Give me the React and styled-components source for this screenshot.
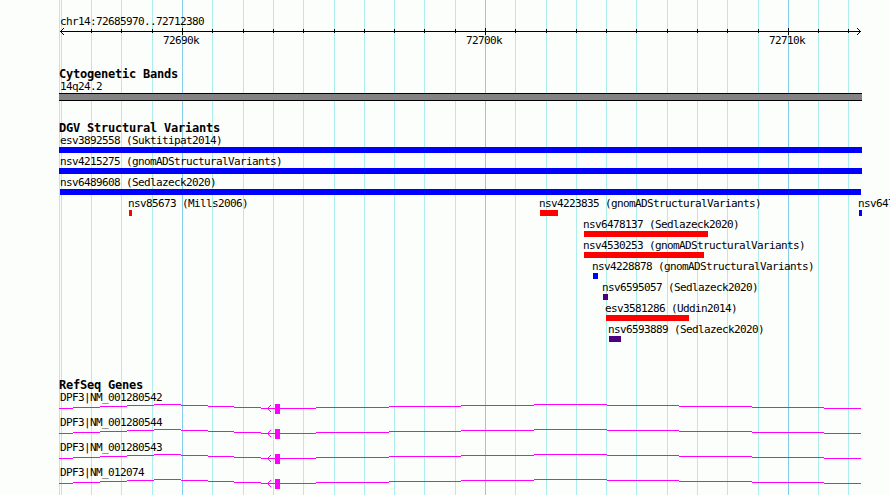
import * as React from 'react'
import styled, { createGlobalStyle } from 'styled-components'

const GlobalStyle = createGlobalStyle`
    body {
        margin: 0;
        background: #fcfefc;
        overflow: hidden;
    }
`

const COLORS = {
    gain: '#0000ff',
    loss: '#ff0000',
    complex: '#4b0082',
    gene: '#ff00ff',
}

const MINOR = [
    91, 121, 152, 212, 243, 273, 303, 334, 364, 394, 424, 455, 515, 546, 576,
    606, 636, 667, 697, 727, 758, 818, 848,
]
const MAJOR = [182, 485, 788]

const VARIANTS = [
    { name: 'esv3892558 (Suktitipat2014)', start: 59, width: 803, type: 'gain' },
    {
        name: 'nsv4215275 (gnomADStructuralVariants)',
        start: 59,
        width: 803,
        type: 'gain',
    },
    { name: 'nsv6489608 (Sedlazeck2020)', start: 60, width: 801, type: 'gain' },
]

const PACKED = [
    { name: 'nsv85673 (Mills2006)', start: 129, width: 3, type: 'loss' },
    {
        name: 'nsv4223835 (gnomADStructuralVariants)',
        start: 540,
        width: 18,
        type: 'loss',
    },
    { name: 'nsv647', start: 859, width: 3, type: 'gain' },
]

const NESTED = [
    { name: 'nsv6478137 (Sedlazeck2020)', start: 584, width: 124, type: 'loss' },
    {
        name: 'nsv4530253 (gnomADStructuralVariants)',
        start: 584,
        width: 120,
        type: 'loss',
    },
    {
        name: 'nsv4228878 (gnomADStructuralVariants)',
        start: 593,
        width: 5,
        type: 'gain',
    },
    { name: 'nsv6595057 (Sedlazeck2020)', start: 603, width: 5, type: 'complex' },
    { name: 'esv3581286 (Uddin2014)', start: 606, width: 83, type: 'loss' },
    { name: 'nsv6593889 (Sedlazeck2020)', start: 609, width: 12, type: 'complex' },
]

// every row holds the features that fit side by side
const ROWS = [...VARIANTS.map(v => [v]), PACKED, ...NESTED.map(v => [v])]

const GENES = [
    'DPF3|NM_001280542',
    'DPF3|NM_001280544',
    'DPF3|NM_001280543',
    'DPF3|NM_012074',
]

// [from, to, y] pieces of the intron line
const INTRON = [
    [59, 73, 4],
    [73, 100, 3],
    [100, 127, 2],
    [127, 154, 1],
    [154, 181, 0],
    [181, 208, 1],
    [208, 234, 2],
    [234, 261, 3],
    [261, 316, 4],
    [316, 389, 3],
    [389, 461, 2],
    [461, 534, 1],
    [534, 607, 0],
    [607, 679, 1],
    [679, 752, 2],
    [752, 824, 3],
    [824, 861, 4],
]

const Page = styled.div`
    position: relative;
    width: 890px;
    height: 495px;
    overflow: hidden;
    background: #fcfefc;
    color: #000;
    font-family: 'DejaVu Sans Mono', 'Liberation Mono', monospace;
`

const GridLines = styled.svg`
    position: absolute;
    inset: 0;
    shape-rendering: crispEdges;
`

const Tracks = styled.main`
    position: relative;
    display: flex;
    flex-direction: column;
`

const Label = styled.div`
    height: 12px;
    line-height: 12px;
    font-size: 11px;
    letter-spacing: -0.622px;
    white-space: pre;
`

const Title = styled.h2`
    margin: 0 0 1px 59px;
    height: 12px;
    line-height: 12px;
    font-size: 12px;
    font-weight: 700;
    letter-spacing: -0.224px;
    white-space: pre;
`

const Ruler = styled.header`
    display: flex;
    flex-direction: column;
    padding-top: 16px;
    height: 53px;
    box-sizing: border-box;
`

const Region = styled(Label)`
    margin-left: 60px;
`

const Axis = styled.svg`
    display: block;
    flex: none;
    shape-rendering: crispEdges;
`

const Scale = styled.div`
    display: grid;
    grid-template-columns: 303px 303px 1fr;
    margin-left: 163px;
`

const Track = styled.section`
    display: flex;
    flex-direction: column;
    margin-top: ${p => p.$gap}px;
`

const Band = styled.div`
    width: 803px;
    height: 8px;
    margin-left: 59px;
    box-sizing: border-box;
    background: #848284;
    border: solid #000;
    border-width: 1px 0;
`

const Row = styled.div`
    display: grid;
    grid-template-columns: ${p => p.$columns};
    height: 21px;
`

const Variant = styled.div`
    min-width: 0;
`

const VariantLabel = styled(Label)`
    margin-left: ${p => p.$shift}px;
`

const Bar = styled.div`
    width: ${p => p.$width}px;
    height: 6px;
    background: ${p => COLORS[p.$type]};
`

const GeneRow = styled.div`
    height: 25px;
`

const GeneModel = styled.svg`
    display: block;
    shape-rendering: crispEdges;
`

const columnsFor = row =>
    row
        .map((v, i) => (i === 0 ? v.start : v.start - row[i - 1].start))
        .map(w => `${w}px`)
        .join(' ') + ' 1fr'

const Background = () => (
    <GridLines width="890" height="495">
        {[59, 61, ...MINOR].map(x => (
            <rect key={x} x={x} y="0" width="1" height="495" fill="#aceeec" />
        ))}
        {MAJOR.map(x => (
            <rect key={x} x={x} y="0" width="1" height="495" fill="#84ceec" />
        ))}
    </GridLines>
)

const AxisLine = () => (
    <Axis width="890" height="7">
        <rect x="60" y="3" width="801" height="1" />
        {MINOR.map(x => (
            <rect key={x} x={x} y="1" width="1" height="4" />
        ))}
        {MAJOR.map(x => (
            <rect key={x} x={x} y="0" width="1" height="7" />
        ))}
        {[1, 2, 3].map(d => (
            <React.Fragment key={d}>
                <rect x={60 + d} y={3 - d} width="1" height="1" />
                <rect x={60 + d} y={3 + d} width="1" height="1" />
                <rect x={860 - d} y={3 - d} width="1" height="1" />
                <rect x={860 - d} y={3 + d} width="1" height="1" />
            </React.Fragment>
        ))}
    </Axis>
)

const Gene = ({ name }) => (
    <GeneRow>
        <Region>{name}</Region>
        <GeneModel width="890" height="10" fill={COLORS.gene}>
            {INTRON.map(([from, to, y]) => (
                <rect key={from} x={from} y={y} width={to - from} height="1" />
            ))}
            {[1, 2, 3].map(d => (
                <React.Fragment key={d}>
                    <rect x={267 + d} y={4 - d} width="1" height="1" />
                    <rect x={267 + d} y={4 + d} width="1" height="1" />
                </React.Fragment>
            ))}
            <rect x="275" y="0" width="5" height="10" />
        </GeneModel>
    </GeneRow>
)

const App = () => (
    <>
        <GlobalStyle />
        <Page>
            <Background />
            <Tracks>
                <Ruler>
                    <Region>chr14:72685970..72712380</Region>
                    <AxisLine />
                    <Scale>
                        <Label>72690k</Label>
                        <Label>72700k</Label>
                        <Label>72710k</Label>
                    </Scale>
                </Ruler>
                <Track $gap={15}>
                    <Title>Cytogenetic Bands</Title>
                    <Region>14q24.2</Region>
                    <Band />
                </Track>
                <Track $gap={21}>
                    <Title>DGV Structural Variants</Title>
                    {ROWS.map(row => (
                        <Row key={row[0].name} $columns={columnsFor(row)}>
                            <span />
                            {row.map(v => (
                                <Variant key={v.name}>
                                    <VariantLabel
                                        $shift={
                                            v.start > 60 ? -1 : 60 - v.start
                                        }
                                    >
                                        {v.name}
                                    </VariantLabel>
                                    <Bar $width={v.width} $type={v.type} />
                                </Variant>
                            ))}
                        </Row>
                    ))}
                </Track>
                <Track $gap={34}>
                    <Title>RefSeq Genes</Title>
                    {GENES.map(name => (
                        <Gene key={name} name={name} />
                    ))}
                </Track>
            </Tracks>
        </Page>
    </>
)

export default App
